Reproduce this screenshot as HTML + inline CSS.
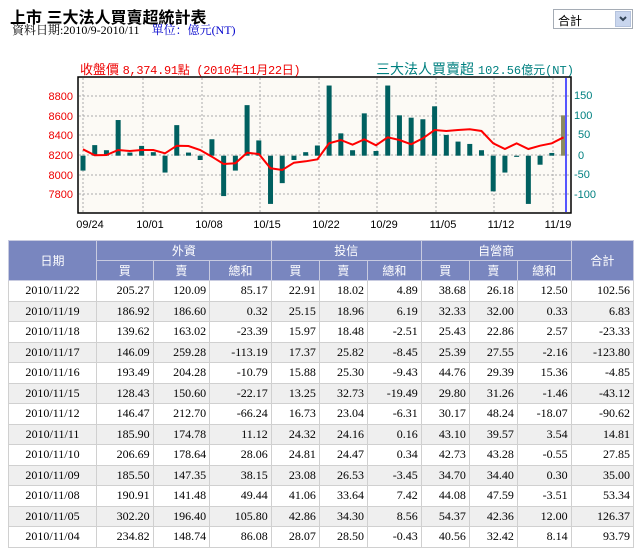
<html><head><style>
body{margin:0;width:640px;height:550px;background:#fff;font-family:"Liberation Serif","Noto Serif CJK SC","Noto Sans CJK TC",serif;overflow:hidden;position:relative}
.t1{position:absolute;left:10px;top:4px;font-size:16px;font-weight:bold;font-family:"Liberation Sans","Noto Sans CJK TC",sans-serif;color:#000}
.t2{position:absolute;left:12px;top:21px;font-size:12px;color:#000}
.t2 span{color:#00c;margin-left:12px}
.sel{position:absolute;left:553px;top:9px;width:78px;height:18px;border:1px solid #a5acb5;font-size:12px;font-family:"Liberation Sans","Noto Sans CJK TC",sans-serif}
.sel b{position:absolute;right:1px;top:1px;width:16px;height:16px;background:#c9d6ee;border:1px solid #b5c3dd;box-sizing:border-box}
table{position:absolute;left:8px;top:240px;border-collapse:collapse;font-size:12px;width:626px}
td,th{border:1px solid #d0d0d0;padding:0 3px;text-align:right;box-sizing:border-box}
td{height:20.5px}
th{background:#7986bf;color:#fff;font-weight:normal;text-align:center;font-family:"Liberation Sans","Noto Sans CJK TC",sans-serif;border-color:#c8cbe0;height:20px}
td:first-child{text-align:center}
tr.g td{background:#efefef}
</style></head><body>
<div class="t1">上市 三大法人買賣超統計表</div>
<div class="t2">資料日期:2010/9-2010/11<span>單位：億元(NT)</span></div>
<div class="sel"><span style="position:absolute;left:4px;top:2px">合計</span><b><svg width="14" height="14"><path d="M4 5l3 3 3-3" stroke="#345" stroke-width="2" fill="none"/></svg></b></div>
<svg id="c" width="640" height="240" style="position:absolute;left:0;top:0" font-family="Liberation Sans,Noto Sans CJK TC,sans-serif">
<rect x="78" y="77" width="493" height="136" fill="#fcfaf5" stroke="#000" stroke-width="1.5"/>
<g id="grid" stroke="#aaa" stroke-dasharray="2,2"></g>
<g id="bars" fill="#006060"></g>
<polyline id="ln" fill="none" stroke="#f00" stroke-width="2"/>
<line x1="566" y1="78" x2="566" y2="212" stroke="#55f" stroke-width="2"/>
<text x="80" y="74" fill="#e00" font-size="13">收盤價 <tspan font-size="12" font-family="Liberation Mono,Noto Sans CJK TC,monospace" textLength="178">8,374.91點 (2010年11月22日)</tspan></text>
<text x="376" y="74" fill="#008080" font-size="14">三大法人買賣超 <tspan font-size="12" font-family="Liberation Mono,Noto Sans CJK TC,monospace">102.56億元(NT)</tspan></text>
<g fill="#e00" font-size="11" text-anchor="end"><text x="73" y="100">8800</text><text x="73" y="120">8600</text><text x="73" y="139">8400</text><text x="73" y="159">8200</text><text x="73" y="179">8000</text><text x="73" y="198">7800</text></g>
<g fill="#008080" font-size="11"><text x="574" y="99">150</text><text x="574" y="119">100</text><text x="578" y="138">50</text><text x="578" y="159">0</text><text x="574" y="178">-50</text><text x="574" y="198">-100</text></g>
<g fill="#000" font-size="11" text-anchor="middle"><text x="90" y="228">09/24</text><text x="150" y="228">10/01</text><text x="209" y="228">10/08</text><text x="267" y="228">10/15</text><text x="326" y="228">10/22</text><text x="384" y="228">10/29</text><text x="443" y="228">11/05</text><text x="501" y="228">11/12</text><text x="558" y="228">11/19</text></g>
</svg>
<script>
var ns="http://www.w3.org/2000/svg",g=document.getElementById("grid");
[83,143,202,260,319,377,436,494,553].forEach(function(x){var l=document.createElementNS(ns,"line");l.setAttribute("x1",x);l.setAttribute("x2",x);l.setAttribute("y1",78);l.setAttribute("y2",212);g.appendChild(l)});
[96,116,135,155,175,194].forEach(function(y){var l=document.createElementNS(ns,"line");l.setAttribute("x1",79);l.setAttribute("x2",570);l.setAttribute("y1",y);l.setAttribute("y2",y);g.appendChild(l)});
var v=[-38,27,14,91,8,25,9,-43,78,8,-11,42,-103,-38,129,39,-123,-70,-11,9,26,179,57,14,108,12,179,103,97,93,126,53,36,30,14,-91,-43,-3,-123,-23,7,103];
var r=[448,466,465,450,453,450,450,460,437,438,450,470,492,490,458,462,505,510,488,484,478,430,420,434,418,436,412,420,433,415,390,393,390,388,393,430,447,430,447,437,430,412];
var b=document.getElementById("bars"),pts=[];
for(var i=0;i<v.length;i++){var x=83+i*11.72,h=v[i]*0.392,y=h>0?155.7-h:155.7;var e=document.createElementNS(ns,"rect");e.setAttribute("x",x-2.5);e.setAttribute("width",5);e.setAttribute("y",y);e.setAttribute("height",Math.abs(h));if(i==41)e.setAttribute("fill","#8a8a60");b.appendChild(e);pts.push(x+","+(r[i]/3).toFixed(1));}
document.getElementById("ln").setAttribute("points",pts.join(" "));
</script>
<table>
<tr><th rowspan="2" style="width:88px">日期</th><th colspan="3">外資</th><th colspan="3">投信</th><th colspan="3">自營商</th><th rowspan="2">合計</th></tr>
<tr><th>買</th><th>賣</th><th>總和</th><th>買</th><th>賣</th><th>總和</th><th>買</th><th>賣</th><th>總和</th></tr>
<tr><td>2010/11/22</td><td>205.27</td><td>120.09</td><td>85.17</td><td>22.91</td><td>18.02</td><td>4.89</td><td>38.68</td><td>26.18</td><td>12.50</td><td>102.56</td></tr>
<tr class="g"><td>2010/11/19</td><td>186.92</td><td>186.60</td><td>0.32</td><td>25.15</td><td>18.96</td><td>6.19</td><td>32.33</td><td>32.00</td><td>0.33</td><td>6.83</td></tr>
<tr><td>2010/11/18</td><td>139.62</td><td>163.02</td><td>-23.39</td><td>15.97</td><td>18.48</td><td>-2.51</td><td>25.43</td><td>22.86</td><td>2.57</td><td>-23.33</td></tr>
<tr class="g"><td>2010/11/17</td><td>146.09</td><td>259.28</td><td>-113.19</td><td>17.37</td><td>25.82</td><td>-8.45</td><td>25.39</td><td>27.55</td><td>-2.16</td><td>-123.80</td></tr>
<tr><td>2010/11/16</td><td>193.49</td><td>204.28</td><td>-10.79</td><td>15.88</td><td>25.30</td><td>-9.43</td><td>44.76</td><td>29.39</td><td>15.36</td><td>-4.85</td></tr>
<tr class="g"><td>2010/11/15</td><td>128.43</td><td>150.60</td><td>-22.17</td><td>13.25</td><td>32.73</td><td>-19.49</td><td>29.80</td><td>31.26</td><td>-1.46</td><td>-43.12</td></tr>
<tr><td>2010/11/12</td><td>146.47</td><td>212.70</td><td>-66.24</td><td>16.73</td><td>23.04</td><td>-6.31</td><td>30.17</td><td>48.24</td><td>-18.07</td><td>-90.62</td></tr>
<tr class="g"><td>2010/11/11</td><td>185.90</td><td>174.78</td><td>11.12</td><td>24.32</td><td>24.16</td><td>0.16</td><td>43.10</td><td>39.57</td><td>3.54</td><td>14.81</td></tr>
<tr><td>2010/11/10</td><td>206.69</td><td>178.64</td><td>28.06</td><td>24.81</td><td>24.47</td><td>0.34</td><td>42.73</td><td>43.28</td><td>-0.55</td><td>27.85</td></tr>
<tr class="g"><td>2010/11/09</td><td>185.50</td><td>147.35</td><td>38.15</td><td>23.08</td><td>26.53</td><td>-3.45</td><td>34.70</td><td>34.40</td><td>0.30</td><td>35.00</td></tr>
<tr><td>2010/11/08</td><td>190.91</td><td>141.48</td><td>49.44</td><td>41.06</td><td>33.64</td><td>7.42</td><td>44.08</td><td>47.59</td><td>-3.51</td><td>53.34</td></tr>
<tr class="g"><td>2010/11/05</td><td>302.20</td><td>196.40</td><td>105.80</td><td>42.86</td><td>34.30</td><td>8.56</td><td>54.37</td><td>42.36</td><td>12.00</td><td>126.37</td></tr>
<tr><td>2010/11/04</td><td>234.82</td><td>148.74</td><td>86.08</td><td>28.07</td><td>28.50</td><td>-0.43</td><td>40.56</td><td>32.42</td><td>8.14</td><td>93.79</td></tr>
</table>
</body></html>
